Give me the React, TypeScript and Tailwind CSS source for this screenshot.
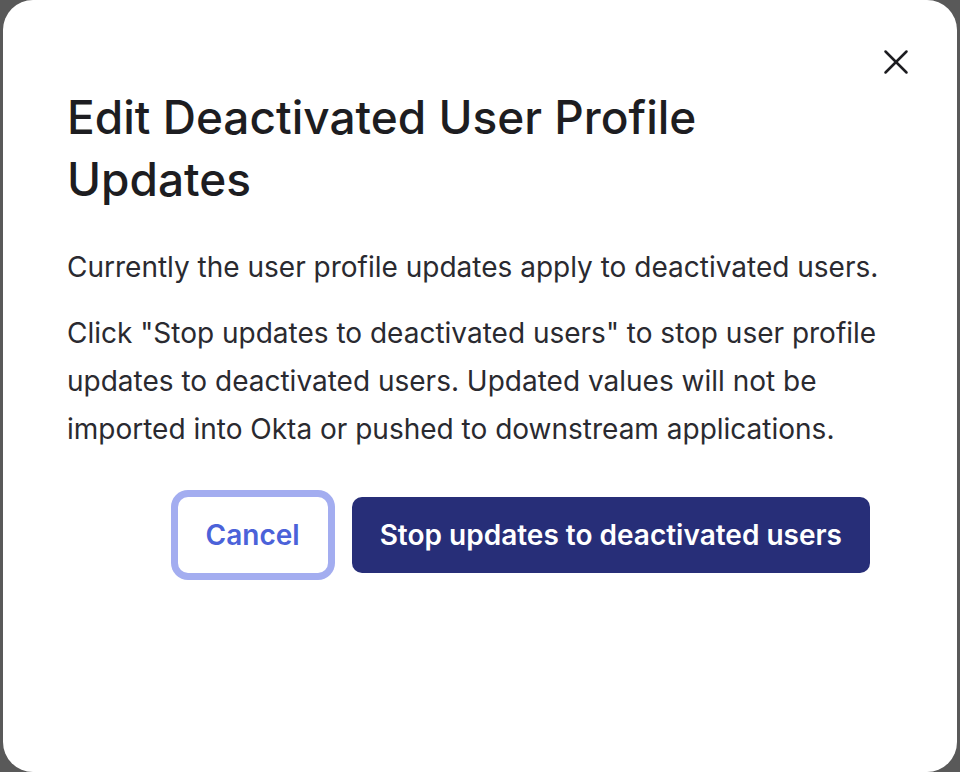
import { X } from "lucide-react";

export default function App() {
  return (
    <div className="h-[772px] w-[960px] overflow-hidden bg-[#595959] px-[3px] font-['Inter',sans-serif]">
      <div className="relative flex h-[772px] flex-col rounded-[30px] bg-white px-16 pt-[86px]">
        <button className="absolute right-[40px] top-[41px] flex h-[42px] w-[42px] items-center justify-center text-[#1d1d21]">
          <X size={42} strokeWidth={1.45} />
        </button>

        <h2 className="pr-[120px] text-[46px] font-medium leading-[62px] text-[#1d1d21]">
          Edit Deactivated User Profile Updates
        </h2>

        <p className="mt-[33px] text-[28px] leading-[48px] text-[#2a2a30]">
          Currently the user profile updates apply to deactivated users.
        </p>
        <p className="mt-[18px] text-[28px] leading-[48px] text-[#2a2a30]">
          Click "Stop updates to deactivated users" to stop user profile updates to deactivated users.
          Updated values will not be imported into Okta or pushed to downstream applications.
        </p>

        <div className="mt-[44px] flex justify-end gap-6 pr-[23px]">
          <button className="h-[76px] rounded-[10px] bg-white px-[28px] text-[28px] font-semibold text-[#4b62d9] ring-[7px] ring-[#a3adf0]">
            Cancel
          </button>
          <button className="h-[76px] rounded-[10px] bg-[#272e78] px-[28px] text-[28px] font-semibold text-white">
            Stop updates to deactivated users
          </button>
        </div>
      </div>
    </div>
  );
}
